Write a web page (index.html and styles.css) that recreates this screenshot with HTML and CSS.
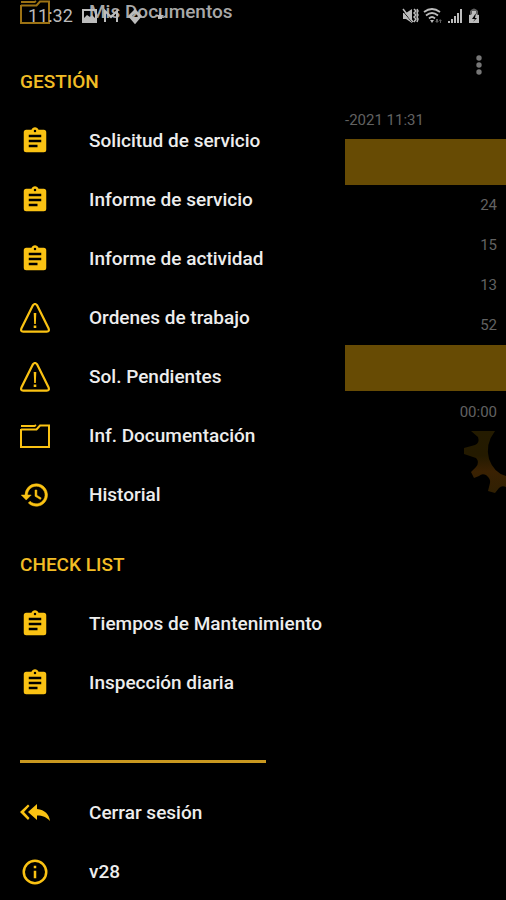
FILE: index.html
```html
<!DOCTYPE html>
<html lang="es">
<head>
<meta charset="utf-8">
<meta name="viewport" content="width=device-width, initial-scale=1">
<title>Menú</title>
<link rel="stylesheet" href="styles.css">
</head>
<body>
<svg class="sprite" aria-hidden="true">
  <symbol id="clipboard" viewBox="0 0 24 24"><path fill="currentColor" d="M19 3h-4.180C14.400 1.840 13.300 1 12 1s-2.400.84-2.820 2H5a2 2 0 0 0-2 2v14a2 2 0 0 0 2 2h14a2 2 0 0 0 2-2V5a2 2 0 0 0-2-2zm-7 0a1 1 0 1 1 0 2 1 1 0 0 1 0-2zm2 14H7v-2h7v2zm3-4H7v-2h10v2zm0-4H7V7h10v2z"/></symbol>
  <symbol id="alert" viewBox="0 0 30 30"><path fill="none" stroke="currentColor" stroke-width="2.200" stroke-linejoin="round" d="M12.800 2.500Q15-.5 17.200 2.500L28.500 25.200Q29.800 28.600 26.800 28.600H3.200Q.2 28.600 1.500 25.200Z"/><path fill="currentColor" d="M13.700 10h2.600l-.5 11h-1.600zM13.700 22.500h2.600V25h-2.600z"/></symbol>
  <symbol id="folder" viewBox="0 0 30 24"><path fill="none" stroke="currentColor" stroke-width="2" d="M1 5V23H29V1.500H20L16.500 5.500H1M1 2H14.500L16 1"/></symbol>
  <symbol id="history" viewBox="0 0 24 24"><path fill="currentColor" stroke="currentColor" stroke-width=".4" d="M13 3a9 9 0 0 0-9 9H1l3.900 3.900.07.140L9 12H6a7 7 0 1 1 2.060 4.940l-1.420 1.420A9 9 0 1 0 13 3zm-1 5v5l4.280 2.540.720-1.210-3.500-2.080V8z"/></symbol>
  <symbol id="reply" viewBox="0 0 30 20"><path fill="currentColor" d="M17 1v5c8 1 12 5 13 12-4-4-7-5.500-13-5.500V17L8 9zM8 1.500 9.500 3 4 9l5.500 6L8 17 0 9z"/></symbol>
  <symbol id="info" viewBox="0 0 24 24"><path fill="currentColor" d="M11 7h2v2h-2zm0 4h2v6h-2zm1-9a10 10 0 1 0 0 20 10 10 0 0 0 0-20zm0 18a8 8 0 1 1 0-16 8 8 0 0 1 0 16z"/></symbol>
</svg>

<header class="status">
  <time>11:32</time>
  <svg class="notices" viewBox="0 0 86 18" aria-hidden="true">
    <path fill="currentColor" fill-rule="evenodd" d="M1 2h15v14H1zM3 4v7l3-3 3 2 2-2 3 3V4z"/>
    <path fill="none" stroke="currentColor" stroke-width="2" d="M24 15V4l6 6 6-6v11"/>
    <path fill="none" stroke="currentColor" stroke-width="3" d="M49 9l5-5 5 5-5 6z"/>
    <path fill="currentColor" d="M50 10h9l-5 6zM79 5l1 3h3l-2 2v2h-4v-2l-2-2h3z"/>
  </svg>
  <svg class="signals" viewBox="0 0 80 18" aria-hidden="true">
    <path fill="currentColor" d="M1 6h3l6-4v14l-6-4H1z"/>
    <path fill="none" stroke="#000" stroke-width="1" d="M0 3l10 12"/>
    <path fill="none" stroke="currentColor" stroke-width="1.500" d="M1 2l10 13M12 2l2 2-2 2 2 2-2 2 2 2-2 3M15 2l1 2-1 2 1 2-1 2 1 2-1 3"/>
    <path fill="none" stroke="currentColor" stroke-width="1.800" d="M22 5q8-6 16 0M24 8.500q6-5 12 0M27 11.500q3-3 6 0"/>
    <path fill="currentColor" d="M28 13h4l-2 3z"/><path fill="currentColor" opacity=".5" d="M34 12h2v2h1l-2 2-2-2h1zM39 16v-2h1l-2-2-1 2h1v2z"/>
    <path fill="currentColor" d="M46 14h2v2h-2zM49 12h2v4h-2zM52 9h2v7h-2zM55 6h2v10h-2zM58 2h2v14h-2z"/>
    <path fill="currentColor" opacity=".5" d="M68 7V4q4-5 8 0v3z"/>
    <path fill="currentColor" fill-rule="evenodd" d="M67 8l3-1V4h4v3l3 1v8H67zM74 6l-4 6h3l-2 3 4-4h-2z"/>
  </svg>
</header>

<div class="screen">
  <nav class="drawer" aria-label="Menú principal">
    <a class="item documents" href="#"><svg class="icon folder"><use href="#folder"/></svg><span>Mis Documentos</span></a>
    <h2>GESTIÓN</h2>
    <a class="item" href="#"><svg class="icon"><use href="#clipboard"/></svg><span>Solicitud de servicio</span></a>
    <a class="item" href="#"><svg class="icon"><use href="#clipboard"/></svg><span>Informe de servicio</span></a>
    <a class="item" href="#"><svg class="icon"><use href="#clipboard"/></svg><span>Informe de actividad</span></a>
    <a class="item" href="#"><svg class="icon"><use href="#alert"/></svg><span>Ordenes de trabajo</span></a>
    <a class="item" href="#"><svg class="icon"><use href="#alert"/></svg><span>Sol. Pendientes</span></a>
    <a class="item" href="#"><svg class="icon folder"><use href="#folder"/></svg><span>Inf. Documentación</span></a>
    <a class="item" href="#"><svg class="icon"><use href="#history"/></svg><span>Historial</span></a>
    <h2>CHECK LIST</h2>
    <a class="item" href="#"><svg class="icon"><use href="#clipboard"/></svg><span>Tiempos de Mantenimiento</span></a>
    <a class="item" href="#"><svg class="icon"><use href="#clipboard"/></svg><span>Inspección diaria</span></a>
    <hr>
    <a class="item" href="#"><svg class="icon reply"><use href="#reply"/></svg><span>Cerrar sesión</span></a>
    <a class="item" href="#"><svg class="icon"><use href="#info"/></svg><span>v28</span></a>
  </nav>

  <main class="page">
    <button class="more" type="button" aria-label="Más opciones"><svg viewBox="0 0 6 22"><circle cx="3" cy="4" r="2.700"/><circle cx="3" cy="11" r="2.700"/><circle cx="3" cy="18" r="2.700"/></svg></button>
    <p class="date">-2021 11:31</p>
    <div class="band"></div>
    <ul class="values"><li>24</li><li>15</li><li>13</li><li>52</li></ul>
    <div class="band"></div>
    <p class="total">00:00</p>
    <svg class="gear" viewBox="0 0 42 64" aria-hidden="true">
      <defs><linearGradient id="rust" x1="0" y1="0" x2="0" y2="1"><stop offset="0" stop-color="#241b00"/><stop offset=".4" stop-color="#241a00"/><stop offset=".65" stop-color="#3a2102"/><stop offset="1" stop-color="#302003"/></linearGradient></defs>
      <path fill="url(#rust)" d="M7 1H31Q21 14 25 29Q30 43 42 46V57Q38 55 35 58L31 63L24 61L26 53Q27 49 22 45Q18 43 15 46L10 48L7 42L12 37Q16 32 12 28L0 24V18L11 15Q16 13 14 7Z"/>
    </svg>
  </main>
</div>
</body>
</html>
```
FILE: styles.css
```css
* { box-sizing: border-box; }

body {
  margin: 0;
  background: #000;
  color: #ededed;
  font: 500 19px/24px Roboto, sans-serif;
  overflow-x: hidden;
}

.sprite { position: absolute; width: 0; height: 0; }

.status {
  position: absolute;
  z-index: 1;
  inset: 0 0 auto;
  display: flex;
  align-items: center;
  gap: 8px;
  height: 32px;
  padding: 0 24px 0 28px;
  color: #bcbcbc;
  font-size: 18px;
  font-weight: 400;
  pointer-events: none;
}
.notices { width: 86px; height: 18px; }
.signals { width: 80px; height: 18px; margin-left: auto; }

.screen {
  display: grid;
  grid-template-columns: 345px 1fr;
  min-height: 100vh;
  overflow: hidden;
}

.drawer { padding-left: 20px; background: #000; }

.item {
  display: grid;
  grid-template-columns: 30px 1fr;
  align-items: center;
  gap: 39px;
  height: 59px;
  color: inherit;
  text-decoration: none;
}
.documents { margin-top: -18px; color: #a8a8a8; }
.documents .icon { color: #9c7214; }

.icon {
  width: 30px;
  height: 30px;
  color: #fac213;
}
.icon.folder { height: 24px; }
.icon.reply { height: 20px; }

h2 {
  margin: 0;
  padding: 29px 0 17px;
  color: #f2bd25;
  font-size: 19px;
  font-weight: 500;
  line-height: 24px;
}

hr {
  width: 246px;
  height: 3px;
  margin: 48px 0 20px;
  border: 0;
  background: #c99820;
}

.page { color: #626262; font-size: 15px; font-weight: 400; }
.page p, .page ul { margin: 0; list-style: none; }

.more {
  display: block;
  margin: 54px 24px 0 auto;
  padding: 0;
  border: 0;
  background: none;
  color: #777;
}
.more svg { display: block; width: 6px; height: 22px; fill: currentColor; }
.date { padding: 32px 0 7px; }
.band { height: 46px; background: #674b04; }
.values { padding: 0 9px; }
.values li { height: 40px; line-height: 40px; text-align: right; }
.total { padding: 9px 9px 6px; text-align: right; }
.gear { display: block; width: 42px; height: 64px; margin-left: auto; }
```
